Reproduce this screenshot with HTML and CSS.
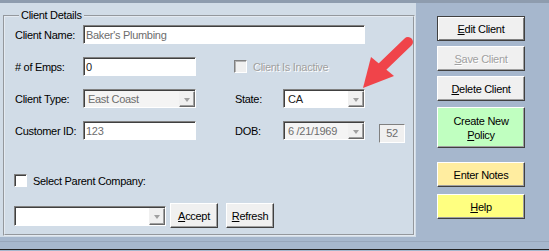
FILE: index.html
```html
<!DOCTYPE html>
<html lang="en">
<head>
    <meta charset="UTF-8">
    <title>Client Details</title>
    <link rel="stylesheet" href="styles.css">
</head>
<body>
    <div class="window">
        <div class="topbar"></div>
        <div class="main">
            <div class="panel">
                <fieldset class="details">
                    <legend>Client Details</legend>
                    <div class="row">
                        <span class="lbl">Client Name:</span>
                        <input class="field field_wide dim" type="text" value="Baker's Plumbing" readonly>
                    </div>
                    <div class="row">
                        <span class="lbl">&#35; of Emps:</span>
                        <input class="field" type="text" value="0" readonly>
                        <span class="check_wrap off">
                            <span class="check"></span>
                            <span>Client Is Inactive</span>
                        </span>
                    </div>
                    <div class="row">
                        <span class="lbl">Client Type:</span>
                        <div class="combo combo_mid grey dim">
                            <span class="val">East Coast</span>
                            <span class="drop"></span>
                        </div>
                        <span class="lbl lbl2">State:</span>
                        <div class="combo combo_small">
                            <span class="val">CA</span>
                            <span class="drop"></span>
                        </div>
                    </div>
                    <div class="row row_last">
                        <span class="lbl">Customer ID:</span>
                        <input class="field dim" type="text" value="123" readonly>
                        <span class="lbl lbl2">DOB:</span>
                        <div class="combo combo_small grey dim">
                            <span class="val">6 /21/1969</span>
                            <span class="drop"></span>
                        </div>
                        <span class="age">52</span>
                    </div>
                    <div class="row">
                        <span class="check_wrap parent">
                            <span class="check white"></span>
                            <span>Select Parent Company:</span>
                        </span>
                    </div>
                    <div class="row row_btns">
                        <div class="combo combo_parent">
                            <span class="val"></span>
                            <span class="drop"></span>
                        </div>
                        <button class="btn btn_small btn_accept"><u>A</u>ccept</button>
                        <button class="btn btn_small btn_refresh"><u>R</u>efresh</button>
                    </div>
                </fieldset>
            </div>
            <div class="actions">
                <button class="btn btn_side btn_default"><u>E</u>dit Client</button>
                <button class="btn btn_side btn_off"><u>S</u>ave Client</button>
                <button class="btn btn_side"><u>D</u>elete Client</button>
                <button class="btn btn_side btn_policy">Create New<br><u>P</u>olicy</button>
                <button class="btn btn_side btn_notes">Enter Notes</button>
                <button class="btn btn_side btn_help"><u>H</u>elp</button>
            </div>
        </div>
        <div class="status"></div>
        <!-- callout arrow drawn over the form -->
        <svg class="arrow" width="549" height="251" viewBox="0 0 549 251">
            <line x1="408" y1="42" x2="381" y2="68" stroke="#f0444a" stroke-width="10" stroke-linecap="round"/>
            <polygon points="363,88 371,57 394,76" fill="#f0444a"/>
        </svg>
    </div>
</body>
</html>
```

FILE: styles.css
```css
body {
    margin: 0;
}
.window {
    position: relative;
    width: 549px;
    height: 251px;
    overflow: hidden;
    background-color: #a6b7cd;
    font-family: "Liberation Sans", Arial, sans-serif;
    font-size: 11px;
    letter-spacing: -0.3px;
    color: #000;
}
.topbar {
    height: 3px;
    background-color: #8e9cae;
}
.main {
    display: flex;
    height: 234px;
}
.panel {
    width: 416px;
    box-sizing: border-box;
    padding: 6px 1px 1px 3px;
    background-color: #d1dce7;
}
.details {
    box-sizing: border-box;
    height: 227px;
    margin: 0;
    padding: 3px 0 0 9px;
    border: 2px groove #e4eaf1;
}
.details legend {
    margin-left: 5px;
    padding: 0 2px;
    line-height: 13px;
}
.row {
    display: flex;
    align-items: center;
    height: 19px;
    margin-bottom: 13px;
}
.row_last {
    margin-bottom: 31px;
}
.row_btns {
    height: 25px;
    margin: 1px 0 0;
}
.lbl {
    width: 68px;
    padding-left: 1px;
    white-space: nowrap;
}
.lbl2 {
    width: 48px;
    margin-left: 38px;
}
.field {
    box-sizing: border-box;
    width: 113px;
    height: 19px;
    margin: 0;
    padding: 0 0 0 2px;
    border: 1px solid;
    border-color: #808080 #fff #fff #808080;
    box-shadow: inset 1px 1px 0 #404040;
    background-color: #fff;
    font: inherit;
    letter-spacing: inherit;
    color: #222;
    outline: none;
}
.field_wide {
    width: 282px;
}
.dim,
.dim .val {
    color: #6d6d6d;
}
.check_wrap {
    display: flex;
    align-items: center;
    margin-left: 38px;
    white-space: nowrap;
}
.check {
    box-sizing: border-box;
    width: 13px;
    height: 13px;
    margin-right: 6px;
    border: 1px solid;
    border-color: #808080 #fff #fff #808080;
    box-shadow: inset 1px 1px 0 #404040;
    background-color: #f0f0f0;
}
.check.white {
    background-color: #fff;
}
.off {
    color: #a0a0a0;
    text-shadow: 1px 1px 0 #fff;
}
.off .check {
    box-shadow: inset 1px 1px 0 #b4b4b4;
}
.parent {
    margin-left: 0;
}
.combo {
    box-sizing: border-box;
    display: flex;
    align-items: stretch;
    height: 19px;
    border: 1px solid;
    border-color: #808080 #fff #fff #808080;
    box-shadow: inset 1px 1px 0 #404040;
    background-color: #fff;
    color: #222;
}
.combo.grey {
    background-color: #f4f4f4;
}
.combo .val {
    flex: 1;
    display: flex;
    align-items: center;
    padding-left: 4px;
    white-space: nowrap;
    overflow: hidden;
}
.combo .drop {
    position: relative;
    box-sizing: border-box;
    width: 16px;
    margin: 1px 0 0;
    border: 1px solid;
    border-color: #f0f0f0 #696969 #696969 #f0f0f0;
    box-shadow: inset -1px -1px 0 #a0a0a0;
    background-color: #f0f0f0;
}
.combo .drop::after {
    content: "";
    position: absolute;
    left: 4px;
    top: 6px;
    border-left: 3px solid transparent;
    border-right: 3px solid transparent;
    border-top: 4px solid #a0a0a0;
}
.combo_mid {
    width: 113px;
}
.combo_small {
    width: 82px;
}
.combo_parent {
    width: 152px;
    height: 20px;
}
.age {
    box-sizing: border-box;
    align-self: flex-start;
    width: 26px;
    height: 19px;
    margin: 3px 0 0 14px;
    padding-top: 2px;
    border: 1px solid;
    border-color: #808080 #fff #fff #808080;
    background-color: #f0f0f0;
    color: #6d6d6d;
    text-align: center;
}
.btn {
    box-sizing: border-box;
    height: 25px;
    padding: 0;
    border: 1px solid;
    border-color: #fff #404040 #404040 #fff;
    box-shadow: inset -1px -1px 0 #a0a0a0;
    background-color: #f0f0f0;
    font: inherit;
    letter-spacing: inherit;
    color: #000;
    cursor: pointer;
}
.btn_small {
    width: 48px;
}
.btn_accept {
    margin-left: 4px;
}
.btn_refresh {
    margin-left: 8px;
}
.actions {
    display: flex;
    flex-direction: column;
    padding: 13px 0 0 21px;
}
.btn_side {
    width: 88px;
    margin-bottom: 5px;
}
.btn_default {
    border-color: #404040;
    box-shadow: inset 1px 1px 0 #fff, inset -1px -1px 0 #808080;
}
.btn_off {
    color: #a0a0a0;
    text-shadow: 1px 1px 0 #fff;
}
.btn_policy {
    height: 41px;
    margin: 1px 0 14px;
    line-height: 14px;
    background-color: #c0ffc0;
}
.btn_notes {
    margin-bottom: 7px;
    background-color: #ffeda0;
}
.btn_help {
    background-color: #ffff80;
}
.status {
    height: 7px;
    margin-top: 4px;
    border-top: 1px solid #97a6bb;
    border-bottom: 1px solid #222;
}
.arrow {
    position: absolute;
    left: 0;
    top: 0;
    pointer-events: none;
}
```
